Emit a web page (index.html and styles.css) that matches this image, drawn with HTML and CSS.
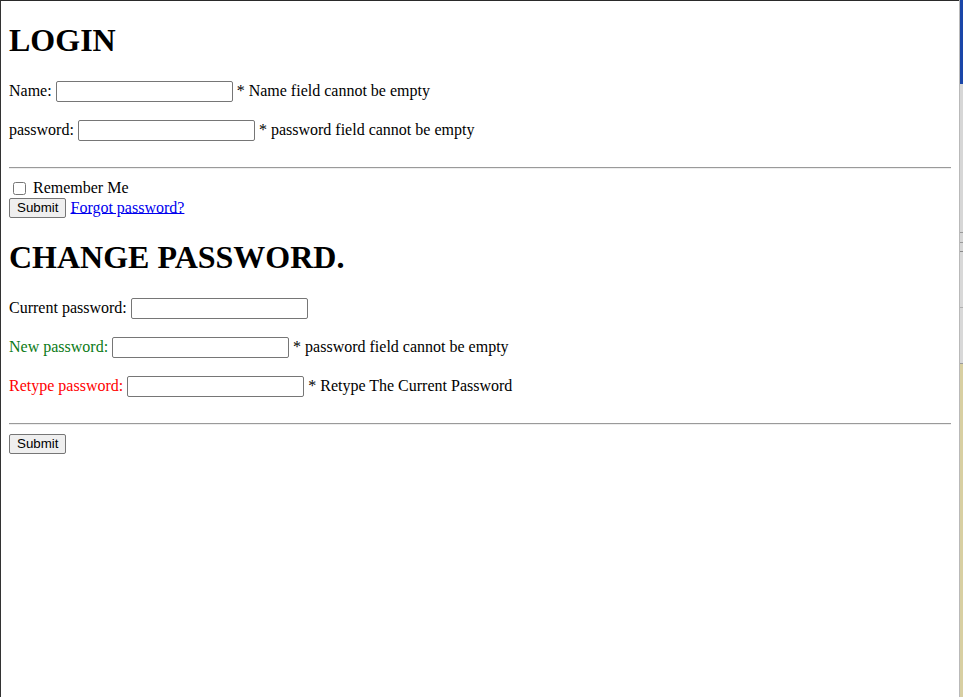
FILE: index.html
```html
<!DOCTYPE html>
<html>
<head>
<meta charset="utf-8">
<title>Login</title>
<link rel="stylesheet" href="styles.css">
</head>
<body>
<div class="screen">
  <div class="page">
    <h1 class="title">LOGIN</h1>
    <form class="form">
      <p class="row">Name: <input class="field" type="text"> * Name field cannot be empty</p>
      <p class="row">password: <input class="field" type="password"> * password field cannot be empty</p>
      <hr class="rule">
      <label class="check-label"><input class="check" type="checkbox"> Remember Me</label><br>
      <button class="btn" type="button">Submit</button> <a class="link" href="#">Forgot password?</a>
    </form>
    <h1 class="title">CHANGE PASSWORD.</h1>
    <form class="form">
      <p class="row">Current password: <input class="field" type="password"></p>
      <p class="row row-green">New password: <input class="field" type="password"> <span class="note">* password field cannot be empty</span></p>
      <p class="row row-red">Retype password: <input class="field" type="password"> <span class="note">* Retype The Current Password</span></p>
      <hr class="rule">
      <button class="btn" type="button">Submit</button>
    </form>
  </div>
  <div class="strip"></div>
</div>
</body>
</html>
```
FILE: styles.css
```css
html, body {
  margin: 0;
  padding: 0;
  background: #ffffff;
}
.screen {
  display: flex;
  width: 963px;
  height: 697px;
  overflow: hidden;
}
.page {
  width: 942px;
  height: 696px;
  border-left: 1px solid #333333;
  border-top: 1px solid #2a2a2a;
  padding: 0 8px;
  font-family: "Liberation Serif", "Times New Roman", serif;
  font-size: 16px;
  color: #000;
  display: flow-root;
}
.title {
  font-size: 32px;
  font-weight: bold;
  margin: 21.44px 0;
}
.form {
  margin: 0;
}
.row {
  margin: 16px 0;
  min-height: 23px;
}
.row-green {
  color: #0b7a16;
}
.row-red {
  color: #ff0000;
}
.note {
  color: #000;
}
.field {
  width: 171px;
  height: 17px;
  padding: 1px 2px;
  border: 1px solid #767676;
  border-radius: 2px;
  font-family: "Liberation Sans", Arial, sans-serif;
  font-size: 13.33px;
  margin: 0;
  vertical-align: baseline;
  background: #fff;
}
.rule {
  margin: 24px 0 9px;
  border: 0;
  border-top: 1px solid #9a9a9a;
  border-bottom: 1px solid #eeeeee;
  height: 0;
}
.check-label {
  display: inline-block;
  padding-top: 1px;
}
.check {
  margin: 3px 3px 3px 4px;
  width: 13px;
  height: 13px;
  vertical-align: -2px;
}
.btn {
  font-family: "Liberation Sans", Arial, sans-serif;
  font-size: 13.33px;
  height: 20px;
  padding: 0 7px;
  border: 1px solid #767676;
  border-radius: 2px;
  background: #efefef;
  color: #000;
  margin: 0;
}
.link {
  color: #0000ee;
  text-decoration: underline;
}
.strip {
  width: 4px;
  height: 697px;
  flex: none;
  background:
    linear-gradient(to right, #b9b9b9 0 1px, transparent 1px),
    linear-gradient(to bottom,
      #1a46a8 0 84px,
      #d6d6d6 84px 232px,
      #9a9a9a 232px 233px,
      #d6d6d6 233px 242px,
      #9a9a9a 242px 243px,
      #d6d6d6 243px 251px,
      #8a8a8a 251px 252px,
      #d8d8d8 252px 307px,
      #b0b0b0 307px 308px,
      #d8d8d8 308px 363px,
      #9a9a9a 363px 364px,
      #d8cfa2 364px 697px);
}
```
